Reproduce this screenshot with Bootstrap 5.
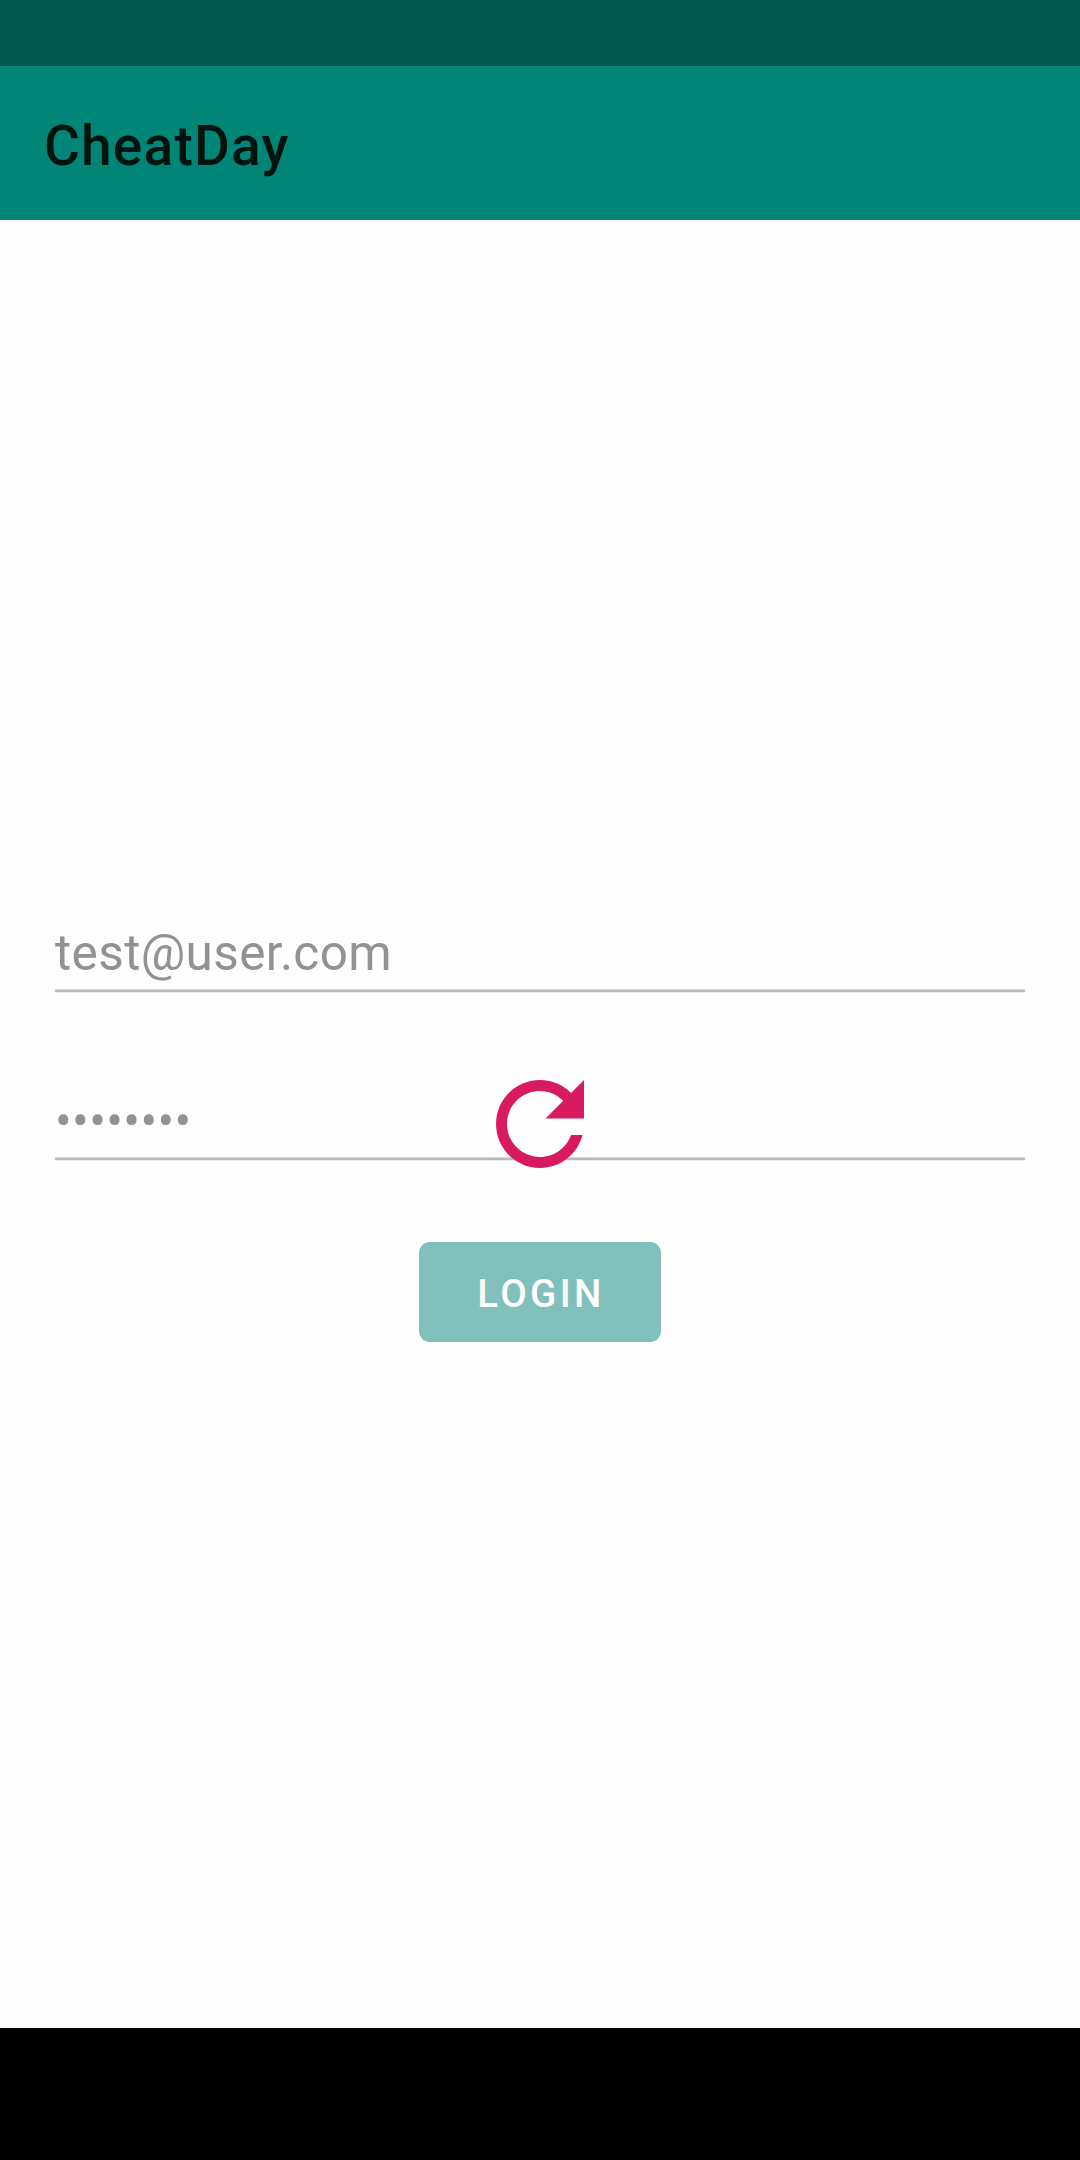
<!DOCTYPE html>
<html lang="en">
<head>
<meta charset="utf-8">
<meta name="viewport" content="width=device-width, initial-scale=1">
<title>CheatDay</title>
<link href="https://cdn.jsdelivr.net/npm/bootstrap@5.3.0/dist/css/bootstrap.min.css" rel="stylesheet">
<style>
body { font-family: Roboto, "Liberation Sans", sans-serif; background: #fefefe; height: 2160px; overflow: hidden; }
.status-strip { height: 66px; background: #00574b; }
.app-bar { height: 154px; background: #008577; padding: 6px 44px 0; }
.app-title { font-size: 55px; font-weight: 500; letter-spacing: 1.2px; line-height: 64px; color: #00140f; }
.login-area { padding: 685px 55px 0; }
.field-line { height: 88px; padding-top: 17px; font-size: 49.5px; line-height: 62px; letter-spacing: .38px; color: #929292; background: linear-gradient(#d9d9d9 0 1px, #b8b8b8 1px 3px, #eee 3px 4px) bottom / 100% 4px no-repeat; }
.field-gap { margin-top: 80px; }
.login-btn { width: 242px; height: 100px; margin-top: 81px; padding: 3px 0 0 2px; border-radius: 11px; background: #82c1bb; font-size: 38.5px; font-weight: 500; letter-spacing: 3.44px; color: #fff; }
.nav-strip { height: 132px; background: #000; }
.refresh-icon { width: 132px; height: 132px; fill: #d81b60; }
</style>
</head>
<body class="d-flex flex-column">
<div class="status-strip flex-shrink-0"></div>
<header class="app-bar flex-shrink-0 d-flex align-items-center"><span class="app-title">CheatDay</span></header>
<main class="login-area flex-grow-1 position-relative d-flex flex-column align-items-center">
  <div class="field-line w-100">test@user.com</div>
  <div class="field-line field-gap w-100">••••••••</div>
  <button type="button" class="login-btn border-0">LOGIN</button>
  <svg class="refresh-icon position-absolute top-50 start-50 translate-middle" viewBox="0 0 24 24" aria-hidden="true"><path d="M17.65 6.35C16.2 4.9 14.21 4 12 4c-4.42 0-7.99 3.58-7.99 8s3.57 8 7.99 8c3.73 0 6.84-2.55 7.73-6h-2.08c-.82 2.33-3.04 4-5.65 4-3.31 0-6-2.69-6-6s2.69-6 6-6c1.66 0 3.14.69 4.22 1.78L13 11h7V4l-2.35 2.35z"/></svg>
</main>
<div class="nav-strip flex-shrink-0"></div>
<script src="https://cdn.jsdelivr.net/npm/bootstrap@5.3.0/dist/js/bootstrap.bundle.min.js"></script>
</body>
</html>
